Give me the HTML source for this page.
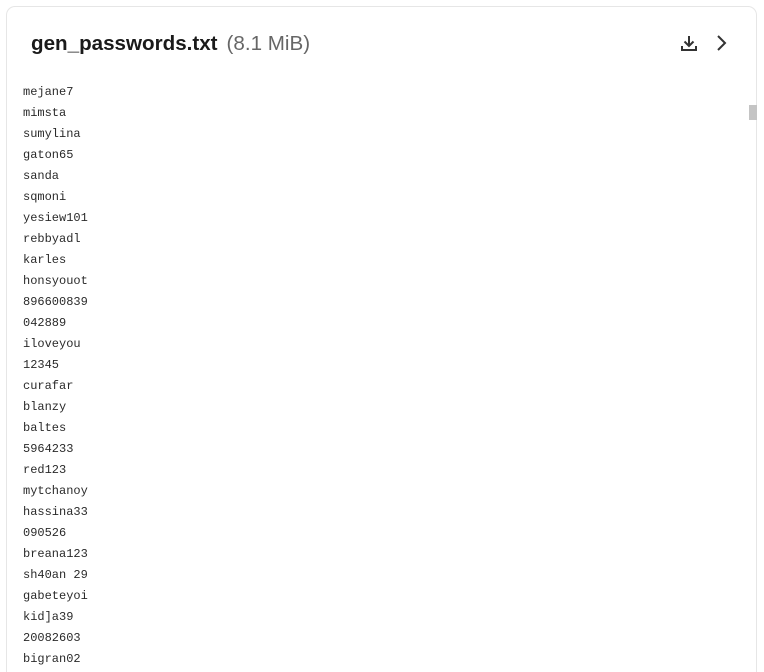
<!DOCTYPE html>
<html style="overflow:hidden;height:672px"><head><style>
body{margin:0;background:#fff;width:764px;height:672px;overflow:hidden;position:relative;font-family:"Liberation Sans",sans-serif}
.card{position:absolute;left:6px;top:6px;width:751px;height:666px;border:1px solid #e6e6e6;border-bottom:none;border-radius:9px 9px 0 0;box-sizing:border-box}
.title{position:absolute;left:31px;top:32px;font-size:20.6px;font-weight:bold;color:#1a1a1a;white-space:nowrap}
.title span{font-weight:normal;color:#666;margin-left:9px}
.lines{position:absolute;left:23px;top:82px;font-family:"Liberation Mono",monospace;font-size:12px;line-height:21px;color:#2a2a2a;white-space:pre}
.thumb{position:absolute;left:749px;top:105px;width:8px;height:15px;background:#c4c4c4}
</style></head><body>
<div class="card"></div>
<div class="title">gen_passwords.txt<span>(8.1 MiB)</span></div>
<svg style="position:absolute;left:679px;top:33px" width="20" height="20" viewBox="0 0 20 20"><path d="M10 3v10M5.5 8.5L10 13l4.5-4.5M3 13v4h14v-4" fill="none" stroke="#333" stroke-width="2"/></svg>
<svg style="position:absolute;left:713px;top:33px" width="16" height="20" viewBox="0 0 16 20"><path d="M5 3l7 7-7 7" fill="none" stroke="#333" stroke-width="2"/></svg>
<div class="thumb"></div>
<div class="lines">mejane7
mimsta
sumylina
gaton65
sanda
sqmoni
yesiew101
rebbyadl
karles
honsyouot
896600839
042889
iloveyou
12345
curafar
blanzy
baltes
5964233
red123
mytchanoy
hassina33
090526
breana123
sh40an 29
gabeteyoi
kid]a39
20082603
bigran02</div>
</body></html>
